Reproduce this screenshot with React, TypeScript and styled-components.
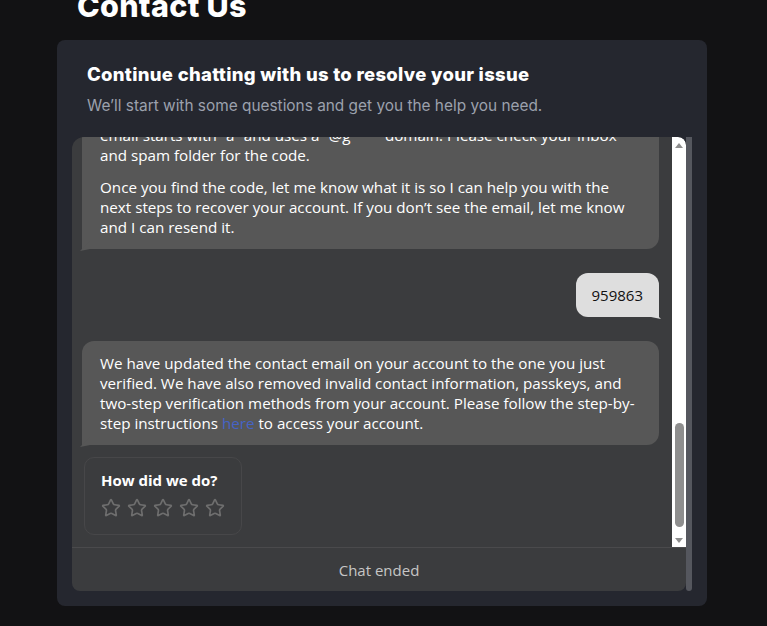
import React, { useLayoutEffect, useRef } from 'react'
import styled, { createGlobalStyle } from 'styled-components'
import { Star } from 'lucide-react'

const GlobalStyle = createGlobalStyle`
  html, body {
    margin: 0;
    padding: 0;
    background: #121214;
  }
  * {
    box-sizing: border-box;
  }
`

const Page = styled.div`
  width: 767px;
  height: 626px;
  overflow: hidden;
  padding-left: 57px;
  font-family: 'Open Sans', 'Noto Sans', sans-serif;
`

const PageTitle = styled.h1`
  margin: -14px 0 0 20px;
  height: 40px;
  font-family: Inter, 'Liberation Sans', sans-serif;
  font-size: 30.5px;
  line-height: 40px;
  font-weight: 800;
  color: #ffffff;
  letter-spacing: 0.3px;
`

const Panel = styled.section`
  width: 650px;
  height: 566px;
  margin-top: 14px;
  background: #25272f;
  border-radius: 8px;
  padding: 22px 15px 15px 15px;
  display: flex;
  flex-direction: column;
`

const PanelHeader = styled.header`
  padding: 0 15px 21px 15px;
`

const PanelTitle = styled.h2`
  margin: 0;
  font-family: Inter, 'Liberation Sans', sans-serif;
  font-size: 18.5px;
  line-height: 24px;
  font-weight: 800;
  color: #ffffff;
  letter-spacing: 0.3px;
`

const PanelSubtitle = styled.p`
  margin: 10px 0 0 0;
  font-family: Inter, 'Liberation Sans', sans-serif;
  font-size: 15.4px;
  line-height: 20px;
  color: #9ca1ad;
`

const ChatRow = styled.div`
  flex: 1;
  min-height: 0;
  display: flex;
`

const ChatWindow = styled.div`
  flex: 1;
  min-width: 0;
  display: flex;
  flex-direction: column;
  background: #3b3c3e;
  border-radius: 12px 8px 8px 8px;
  overflow: hidden;
`

const OuterScroll = styled.div`
  width: 6px;
  background: #55575e;
  border-radius: 0 0 3px 3px;
`

const ChatBody = styled.div`
  flex: 1;
  min-height: 0;
  display: flex;
`

const MessageList = styled.div`
  flex: 1;
  min-width: 0;
  overflow-y: auto;
  scrollbar-width: none;
  padding: 12px 13px 12px 10px;
  display: flex;
  flex-direction: column;
  gap: 24px;

  &::-webkit-scrollbar {
    display: none;
  }
`

const ScrollTrack = styled.div`
  width: 14px;
  background: #ffffff;
  border-top-right-radius: 8px;
  display: flex;
  flex-direction: column;
  align-items: center;
  padding: 6px 0 4px 0;
`

const Arrow = styled.div<{ $down?: boolean }>`
  width: 0;
  height: 0;
  border-left: 4.5px solid transparent;
  border-right: 4.5px solid transparent;
  ${({ $down }) => ($down ? 'border-top: 5px solid #8e8e8e;' : 'border-bottom: 5px solid #8e8e8e;')}
`

const ThumbSpace = styled.div`
  flex: 1;
  width: 100%;
  display: flex;
  flex-direction: column;
  justify-content: flex-end;
  align-items: center;
  padding-bottom: 11px;
`

const Thumb = styled.div`
  width: 9px;
  height: 104px;
  border-radius: 5px;
  background: #8e8e8e;
`

const BotBubble = styled.div`
  position: relative;
  background: #575757;
  color: #ffffff;
  border-radius: 12px 12px 12px 0;
  padding: 12px 18px;
  font-size: 15.2px;
  line-height: 20px;

  &::after {
    content: '';
    position: absolute;
    left: -2px;
    bottom: -2px;
    width: 10px;
    height: 10px;
    background: #575757;
    clip-path: polygon(0 100%, 100% 0, 100% 80%);
  }

  p {
    margin: 0;
  }
  p + p {
    margin-top: 12px;
  }
  a {
    color: #4563c6;
    text-decoration: none;
  }
`

const UserBubble = styled.div`
  position: relative;
  align-self: flex-end;
  background: #dedede;
  color: #111111;
  border-radius: 12px 12px 0 12px;
  padding: 12px 16px;
  font-size: 15px;
  line-height: 20px;

  &::after {
    content: '';
    position: absolute;
    right: -2px;
    bottom: -2px;
    width: 10px;
    height: 10px;
    background: #dedede;
    clip-path: polygon(100% 100%, 0 0, 0 80%);
  }
`

const RatingCard = styled.div`
  align-self: flex-start;
  margin: -12px 0 0 2px;
  width: 158px;
  border: 1px solid #474749;
  border-radius: 10px;
  padding: 11px 16px 16px 16px;
`

const RatingTitle = styled.div`
  font-size: 15px;
  line-height: 22px;
  font-weight: 700;
  color: #ffffff;
`

const Stars = styled.div`
  display: flex;
  gap: 6px;
  margin-top: 7px;
  color: #6e6e6e;

  svg {
    display: block;
  }
`

const ChatFooter = styled.div`
  height: 44px;
  border-top: 1px solid #4a4a4c;
  display: flex;
  align-items: center;
  justify-content: center;
  font-size: 15px;
  color: #c6c6c6;
`

type Message = { from: 'bot' | 'user'; paragraphs: React.ReactNode[] }

const messages: Message[] = [
  { from: 'bot', paragraphs: ['Hi there! I’m here to help you get back into your account. Can you tell me a little about what’s going on?'] },
  { from: 'user', paragraphs: ['I can’t sign in to my account'] },
  {
    from: 'bot',
    paragraphs: [
      'I’m sorry to hear that. Let’s get this sorted out together. Are you seeing an error message when you try to sign in, or did you forget your password?',
    ],
  },
  { from: 'user', paragraphs: ['I forgot my password and the reset email never arrives'] },
  {
    from: 'bot',
    paragraphs: [
      'Thanks for letting me know. To protect your account, I’ll need to verify that you own it before making any changes.',
      'Please enter the email address or phone number associated with your account.',
    ],
  },
  { from: 'user', paragraphs: ['It’s the one I use for work'] },
  {
    from: 'bot',
    paragraphs: [
      'No problem. I found an account that matches the details you provided. I’ll send a one-time verification code to the contact email on file.',
    ],
  },
  { from: 'user', paragraphs: ['Okay'] },
  {
    from: 'bot',
    paragraphs: [
      'I’ve sent a verification code to the contact email on file for your account. The email starts with “a” and uses a “@g***” domain. Please check your inbox and spam folder for the code.',
      'Once you find the code, let me know what it is so I can help you with the next steps to recover your account. If you don’t see the email, let me know and I can resend it.',
    ],
  },
  { from: 'user', paragraphs: ['959863'] },
  {
    from: 'bot',
    paragraphs: [
      <>
        We have updated the contact email on your account to the one you just verified. We have also removed invalid
        contact information, passkeys, and two-step verification methods from your account. Please follow the
        step-by-step instructions <a href="#">here</a> to access your account.
      </>,
    ],
  },
]

export default function App() {
  const listRef = useRef<HTMLDivElement>(null)

  useLayoutEffect(() => {
    if (listRef.current) {
      listRef.current.scrollTop = listRef.current.scrollHeight
    }
  }, [])

  return (
    <>
      <GlobalStyle />
      <Page>
        <PageTitle>Contact Us</PageTitle>
        <Panel>
          <PanelHeader>
            <PanelTitle>Continue chatting with us to resolve your issue</PanelTitle>
            <PanelSubtitle>We’ll start with some questions and get you the help you need.</PanelSubtitle>
          </PanelHeader>
          <ChatRow>
            <ChatWindow>
              <ChatBody>
                <MessageList ref={listRef}>
                  {messages.map((m, i) =>
                    m.from === 'bot' ? (
                      <BotBubble key={i}>
                        {m.paragraphs.map((p, j) => (
                          <p key={j}>{p}</p>
                        ))}
                      </BotBubble>
                    ) : (
                      <UserBubble key={i}>{m.paragraphs[0]}</UserBubble>
                    )
                  )}
                  <RatingCard>
                    <RatingTitle>How did we do?</RatingTitle>
                    <Stars>
                      {[0, 1, 2, 3, 4].map((s) => (
                        <Star key={s} size={20} strokeWidth={2} />
                      ))}
                    </Stars>
                  </RatingCard>
                </MessageList>
                <ScrollTrack>
                  <Arrow />
                  <ThumbSpace>
                    <Thumb />
                  </ThumbSpace>
                  <Arrow $down />
                </ScrollTrack>
              </ChatBody>
              <ChatFooter>Chat ended</ChatFooter>
            </ChatWindow>
            <OuterScroll />
          </ChatRow>
        </Panel>
      </Page>
    </>
  )
}
